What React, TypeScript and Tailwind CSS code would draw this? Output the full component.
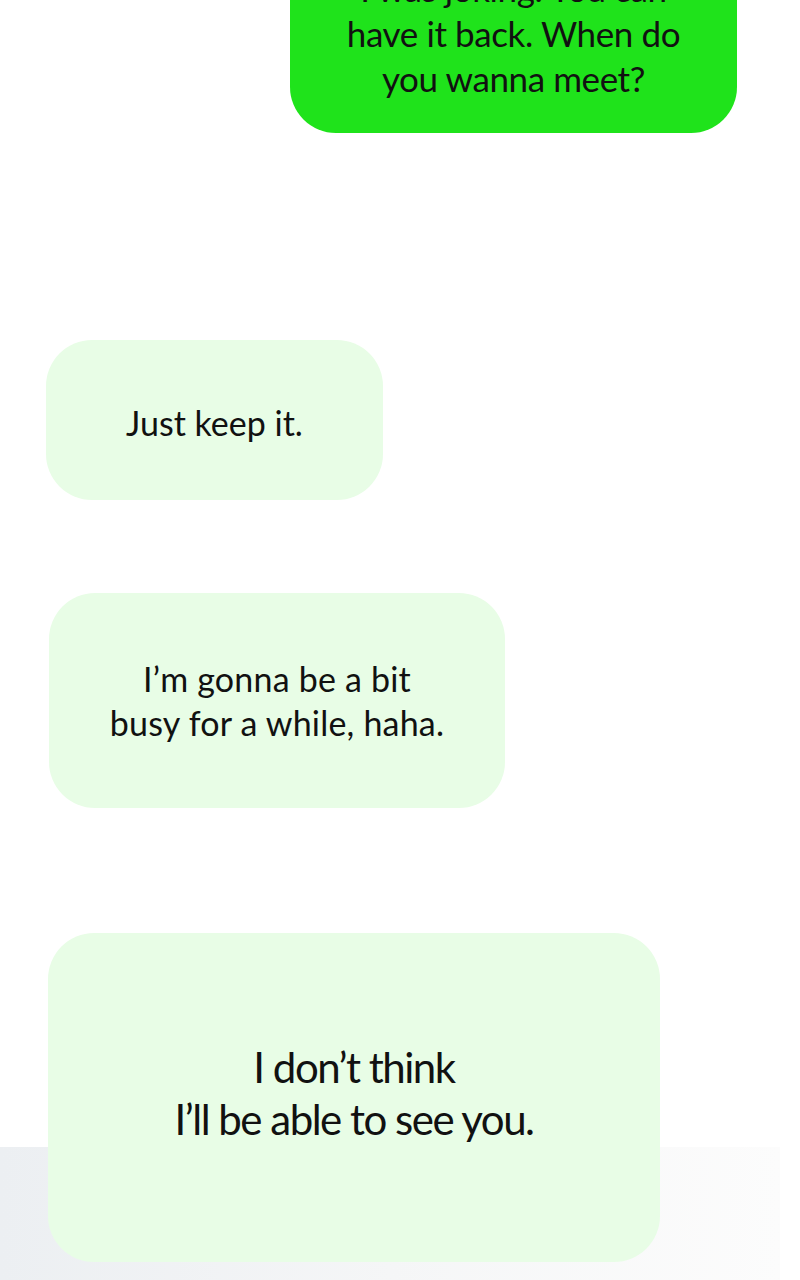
type BubbleProps = {
  text: string[]
  className: string
  textClassName?: string
}

const Bubble = ({ text, className, textClassName }: BubbleProps) => {
  return (
    <div className={`flex flex-col items-center justify-center rounded-[46px] text-[#111] ${className}`}>
      {text.map((line) => (
        <p key={line} className={`whitespace-nowrap ${textClassName ?? ""}`}>
          {line}
        </p>
      ))}
    </div>
  )
}

export default function App() {
  return (
    <div
      className="relative w-[800px] h-[1280px] overflow-hidden bg-white"
      style={{ fontFamily: "Lato, 'Open Sans', sans-serif" }}
    >
      {/* faded floor at the bottom of the panel */}
      <div className="absolute left-0 bottom-0 w-[780px] h-[133px] bg-gradient-to-r from-[#eceff2] via-[#f5f6f7] to-[#fcfcfc]" />

      <div className="relative flex flex-col">
        <Bubble
          text={["I was joking. You can", "have it back. When do", "you wanna meet?"]}
          className="-mt-[64px] ml-[290px] w-[447px] pt-[30px] pb-[32px] bg-[#1fe31b]"
          textClassName="text-[35px] leading-[45px] tracking-[-0.4px]"
        />

        <Bubble
          text={["Just keep it."]}
          className="mt-[207px] ml-[46px] w-[337px] h-[160px] pt-[6px] bg-[#e8fde6]"
          textClassName="text-[34px] leading-[44px]"
        />

        <Bubble
          text={["I’m gonna be a bit", "busy for a while, haha."]}
          className="mt-[93px] ml-[49px] w-[456px] h-[215px] bg-[#e8fde6]"
          textClassName="text-[34px] leading-[44px] tracking-[0.2px]"
        />

        <Bubble
          text={["I don’t think", "I’ll be able to see you."]}
          className="mt-[125px] ml-[48px] w-[612px] h-[329px] pb-[10px] bg-[#e8fde6]"
          textClassName="text-[42px] leading-[52px] tracking-[-1.5px]"
        />
      </div>
    </div>
  )
}
